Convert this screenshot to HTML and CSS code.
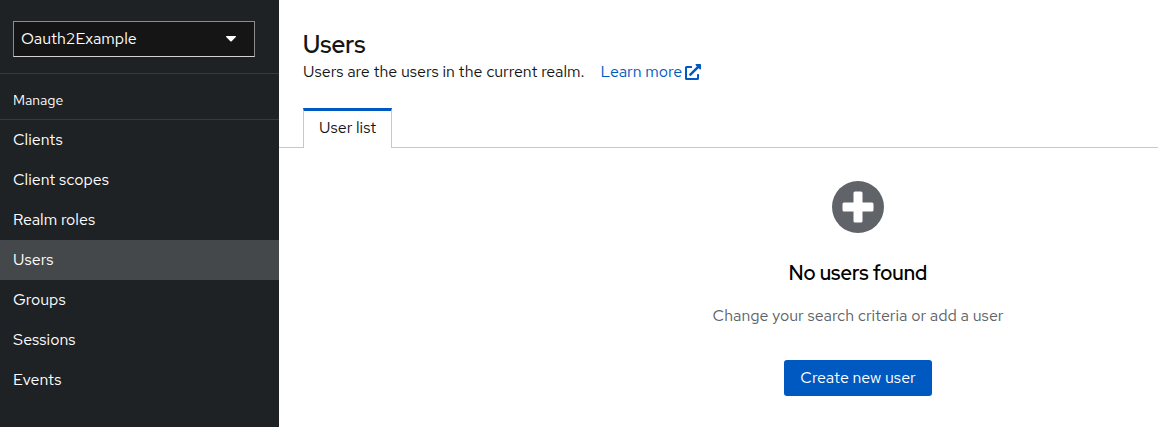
FILE: index.html
```html
<!DOCTYPE html>
<html lang="en">
<head>
<meta charset="utf-8">
<meta name="viewport" content="width=device-width, initial-scale=1">
<title>Users</title>
<link rel="stylesheet" href="styles.css">
</head>
<body>
<div class="page">
  <aside class="sidebar">
    <div class="realm">
      <select class="realm-select" aria-label="Realm">
        <option>Oauth2Example</option>
      </select>
      <svg class="realm-caret" viewBox="0 0 10 6" aria-hidden="true"><path d="M.6 0h8.8c.6 0 .8.6.4 1L5.7 5.2a1 1 0 0 1-1.4 0L.2 1C-.2.6 0 0 .6 0z"/></svg>
    </div>
    <nav class="nav" aria-labelledby="nav-title">
      <h2 class="nav-title" id="nav-title">Manage</h2>
      <ul class="nav-list">
        <li><a class="nav-link" href="#clients">Clients</a></li>
        <li><a class="nav-link" href="#client-scopes">Client scopes</a></li>
        <li><a class="nav-link" href="#roles">Realm roles</a></li>
        <li><a class="nav-link nav-link-current" href="#users" aria-current="page">Users</a></li>
        <li><a class="nav-link" href="#groups">Groups</a></li>
        <li><a class="nav-link" href="#sessions">Sessions</a></li>
        <li><a class="nav-link" href="#events">Events</a></li>
      </ul>
    </nav>
  </aside>
  <main class="main">
    <header class="header">
      <h1 class="title">Users</h1>
      <p class="intro">
        <span>Users are the users in the current realm.</span>
        <a class="learn" href="#learn-more">Learn more
          <svg class="learn-icon" viewBox="0 0 512 512" aria-hidden="true"><path d="M432 320h-32a16 16 0 0 0-16 16v112H64V128h144a16 16 0 0 0 16-16V80a16 16 0 0 0-16-16H48a48 48 0 0 0-48 48v352a48 48 0 0 0 48 48h352a48 48 0 0 0 48-48V336a16 16 0 0 0-16-16zM488 0H360c-21.400 0-32 25.900-17 41l35.700 35.700L135 320.400a24 24 0 0 0 0 34L157.700 377a24 24 0 0 0 34 0l243.600-243.700L471 169c15 15 41 4.500 41-17V24a24 24 0 0 0-24-24z"/></svg>
        </a>
      </p>
    </header>
    <div class="tabs" role="tablist">
      <button class="tab" type="button" role="tab" aria-selected="true">User list</button>
    </div>
    <section class="empty">
      <svg class="empty-icon" viewBox="0 0 52 52" aria-hidden="true"><circle class="empty-disc" cx="26" cy="26" r="26"/><path class="empty-plus" d="M23 10.500h6a1.500 1.500 0 0 1 1.500 1.500v9.500H40a1.500 1.500 0 0 1 1.500 1.500v6a1.500 1.500 0 0 1-1.500 1.500h-9.500V40a1.500 1.500 0 0 1-1.500 1.500h-6a1.500 1.500 0 0 1-1.500-1.500v-9.500H12a1.500 1.500 0 0 1-1.500-1.500v-6a1.500 1.500 0 0 1 1.500-1.500h9.500V12a1.500 1.500 0 0 1 1.500-1.500z"/></svg>
      <h2 class="empty-title">No users found</h2>
      <p class="empty-text">Change your search criteria or add a user</p>
      <button class="create" type="button">Create new user</button>
    </section>
  </main>
</div>
</body>
</html>
```
FILE: styles.css
```css
* {
  box-sizing: border-box;
}

body {
  margin: 0;
  background: #fff;
  color: #151515;
  font-family: "Red Hat Text", Roboto, "Liberation Sans", sans-serif;
  font-size: 16px;
  line-height: 24px;
}

h1, h2, p, ul {
  margin: 0;
  padding: 0;
}

button, select {
  font: inherit;
}

.page {
  display: flex;
  min-height: 100vh;
  overflow: hidden;
}

.sidebar {
  flex: 0 0 279px;
  background: #1e2225;
  color: #fff;
}

.realm {
  display: grid;
  align-items: center;
  padding: 21px 24px 16px 13px;
  border-bottom: 1px solid #383b3e;
}

.realm-select {
  grid-area: 1 / 1;
  height: 36px;
  padding: 0 7px;
  border: 1px solid #8a8d90;
  border-bottom-color: #d2d2d2;
  border-radius: 0;
  background: #151515;
  color: #fff;
  appearance: none;
}

.realm-caret {
  grid-area: 1 / 1;
  justify-self: end;
  width: 10px;
  margin-right: 19px;
  fill: #fff;
  pointer-events: none;
}

.nav-title {
  padding: 14px 13px 6px;
  border-bottom: 1px solid #383b3e;
  font-size: 14px;
  font-weight: 400;
  line-height: 25px;
}

.nav-list {
  list-style: none;
}

.nav-link {
  display: block;
  padding: 8px 13px;
  color: #fff;
  text-decoration: none;
}

.nav-link-current {
  background: #45484b;
}

/* The content pane is as wide as the window and runs past its right edge. */
.main {
  flex: 0 0 100vw;
}

.header {
  padding: 29px 24px 24px;
}

.title {
  font-family: "Red Hat Display", Roboto, "Liberation Sans", sans-serif;
  font-size: 24px;
  font-weight: 600;
  line-height: 31px;
}

.intro {
  display: flex;
  gap: 16px;
}

.learn {
  display: flex;
  align-items: center;
  gap: 3px;
  color: #0059c1;
  text-decoration: none;
}

.learn-icon {
  width: 16px;
  height: 16px;
  fill: currentColor;
}

.tabs {
  display: flex;
  padding: 0 24px;
  box-shadow: inset 0 -1px #c8c8c8;
}

.tab {
  height: 40px;
  padding: 0 15px 4px;
  border: 1px solid #c8c8c8;
  border-top: 3px solid #0059c1;
  border-bottom: 0;
  background: #fff;
  color: #151515;
}

.empty {
  display: flex;
  flex-direction: column;
  align-items: center;
  padding: 33px 32px 32px;
}

.empty-icon {
  width: 52px;
  height: 52px;
}

.empty-disc {
  fill: #606368;
}

.empty-plus {
  fill: #fff;
}

.empty-title {
  margin-top: 24px;
  color: #000;
  font-family: "Red Hat Display", Roboto, "Liberation Sans", sans-serif;
  font-size: 20px;
  font-weight: 600;
  line-height: 32px;
}

.empty-text {
  margin-top: 15px;
  color: #606368;
}

.create {
  height: 36px;
  margin-top: 32px;
  padding: 0 16px;
  border: 0;
  border-radius: 3px;
  background: #0059c1;
  color: #fff;
}
```
